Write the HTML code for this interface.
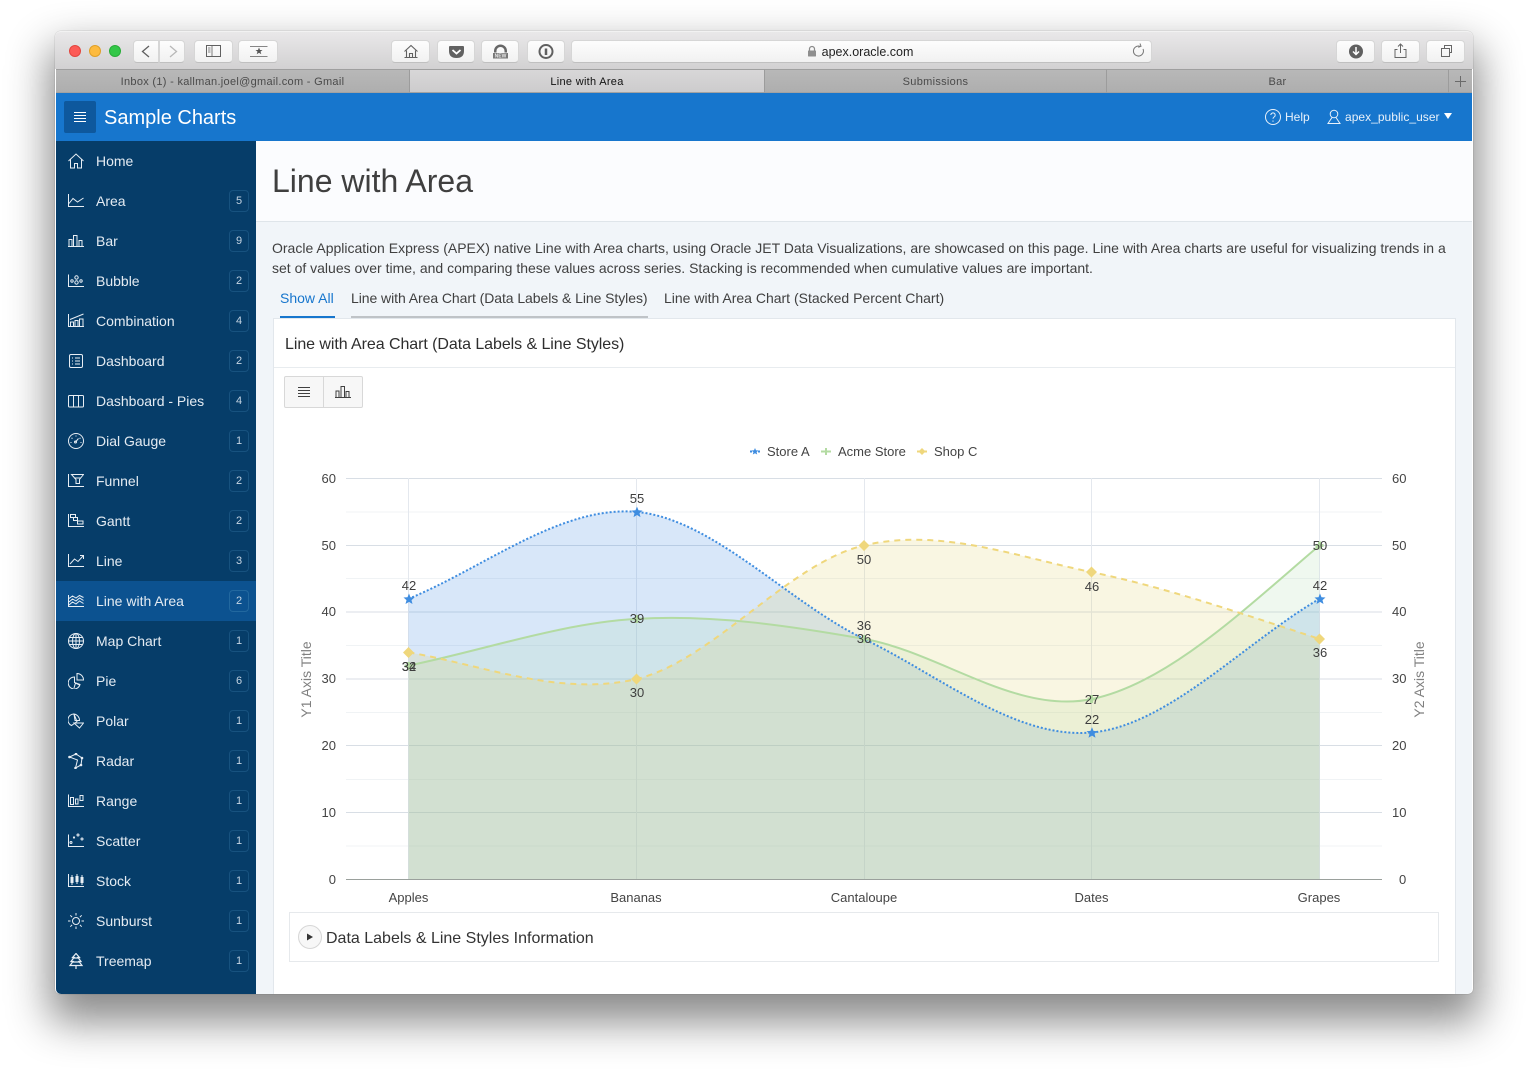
<!DOCTYPE html>
<html lang="en"><head><meta charset="utf-8"><title>Line with Area</title>
<style>
*{box-sizing:border-box}
html,body{margin:0;padding:0;width:1528px;height:1074px;overflow:hidden;background:#fff;font-family:"Liberation Sans",sans-serif}
.a{position:absolute;white-space:nowrap}
#win{position:absolute;left:55px;top:31px;width:1418px;height:963px;border-radius:6px 6px 5px 5px;box-shadow:0 22px 42px 6px rgba(0,0,0,.46),0 0 1px rgba(0,0,0,.4)}
#chrome{position:absolute;left:55px;top:31px;width:1418px;height:38px;border-radius:6px 6px 0 0;background:linear-gradient(#e9e8e9,#d2d1d2);border-top:1px solid #f2f2f2}
.dot{position:absolute;top:45px;width:12px;height:12px;border-radius:50%}
.btn{position:absolute;top:40px;height:23px;border-radius:4px;background:linear-gradient(#fdfdfd,#f1f1f1);border:1px solid #d6d6d6;border-bottom-color:#c0c0c0}
.tab{position:absolute;top:69px;height:24px;background:linear-gradient(#b8b8b8,#aeaeae);border-top:1px solid #9f9f9f;border-bottom:1px solid #a2a2a2;border-right:1px solid #9c9c9c;text-align:center;font-size:11px;line-height:24px;color:#4a4a4a;letter-spacing:.3px}
#hdr{position:absolute;left:56px;top:93px;width:1416px;height:48px;background:#1776cd}
#side{position:absolute;left:56px;top:141px;width:200px;height:853px;background:#063d69;border-radius:0 0 0 5px}
.row{position:absolute;left:56px;width:200px;height:40px;color:#e4ebf2;font-size:14px;line-height:40px}
.row span{position:absolute;left:40px}
.row b{position:absolute;left:173px;top:9px;width:20px;height:22px;border:1px solid #17527f;border-radius:4px;font-weight:normal;font-size:11px;line-height:21px;text-align:center;color:#c6d5e3}
.row svg{position:absolute;left:12px;top:12px;width:16px;height:16px;fill:none;stroke:#e8eef4;stroke-width:1}
#main{position:absolute;left:256px;top:141px;width:1216px;height:853px;background:#f1f5f9;border-radius:0 0 5px 0;overflow:hidden}
svg text{font-family:"Liberation Sans",sans-serif}
</style></head><body>
<div id="win"></div>
<div id="chrome"></div>
<div class="dot" style="left:69px;background:#fc5b57;border:1px solid #e2463f"></div>
<div class="dot" style="left:89px;background:#fdbb40;border:1px solid #e0a028"></div>
<div class="dot" style="left:109px;background:#33c748;border:1px solid #28ad38"></div>

<div class="btn" style="left:133px;width:26px;border-radius:4px 0 0 4px"></div>
<div class="btn" style="left:159px;width:26px;border-radius:0 4px 4px 0"></div>
<div class="btn" style="left:194px;width:39px"></div>
<div class="btn" style="left:238px;width:40px"></div>
<div class="btn" style="left:391px;width:39px"></div>
<div class="btn" style="left:437px;width:38px"></div>
<div class="btn" style="left:481px;width:38px"></div>
<div class="btn" style="left:527px;width:38px"></div>
<div class="btn" style="left:571px;width:581px"></div>
<div class="btn" style="left:1336px;width:39px"></div>
<div class="btn" style="left:1381px;width:39px"></div>
<div class="btn" style="left:1426px;width:39px"></div>
<svg class="a" style="left:0;top:0" width="1528" height="93" fill="none" stroke="#606060">
<path d="M149 46l-6.500 5.500 6.500 5.500" stroke-width="1.300"/><path d="M170 46l6.500 5.500-6.500 5.500" stroke="#b8b8b8" stroke-width="1.300"/>
<rect x="206.500" y="45.500" width="14" height="11"/><path d="M212 46v10M208 48h2.500M208 50h2.500M208 52h2.500" stroke-width=".8"/>
<path d="M250 46.500h17.500M250 56.500h17.500" stroke-width=".8"/><path d="M259 47.500l1 2.500h2.500l-2 1.600.8 2.600-2.300-1.500-2.300 1.500.8-2.600-2-1.600h2.500z" fill="#555" stroke="none"/>
<path d="M404.500 51.500l6.500-6 6.500 6M406.500 50.500v7h9v-7M409.500 57.500v-4h3v4M404.500 57.500h13" stroke-width="1.100"/>
<path d="M449 46h14q1 0 1 1v4q0 7-7.500 7t-7.500-7v-4q0-1 1-1z" fill="#616161" stroke="none"/><path d="M452.500 50l4 3.500 4-3.500" stroke="#fff" stroke-width="1.800"/>
<path d="M494 52.500v-1.500a6.500 6.500 0 0 1 13 0v1.500h-2.500v-1.500a4 4 0 0 0-8 0v1.500z" fill="#666" stroke="none"/><rect x="493" y="53" width="15" height="5.500" fill="#777" stroke="none"/>
<text x="500.500" y="57.600" font-size="5" font-weight="bold" fill="#e8e8e8" stroke="none" text-anchor="middle">NEW</text>
<circle cx="546" cy="51.500" r="6.500" stroke-width="2"/><path d="M546 48.500v6.500" stroke-width="2.500"/>
<path d="M809.500 50.500v-1.500a2.500 2.500 0 0 1 5 0v1.500" stroke="#8a8a8a" stroke-width="1.200"/><rect x="808" y="50.500" width="8" height="6" rx=".5" fill="#8e8e8e" stroke="none"/>
<path d="M1143 49a5 5 0 1 1-3-2.700M1140 43.500l1 2.800-2.800 1" stroke="#777"/>
<circle cx="1356" cy="51.500" r="7" fill="#5f5f5f" stroke="none"/><path d="M1356 47v7M1353 51.500l3 3 3-3" stroke="#fff" stroke-width="1.500"/>
<path d="M1397.500 49.500h-2.500v8h11v-8h-2.500M1400.500 44v9M1398 46.500l2.500-2.500 2.500 2.500" stroke="#666"/>
<rect x="1441.500" y="48.500" width="8" height="8" stroke="#666"/><path d="M1444.500 48v-2.500h7v7h-2" stroke="#666"/>
</svg>
<div class="a" style="left:571px;width:581px;top:45px;text-align:center;font-size:12.500px;color:#222;padding-left:12px">apex.oracle.com</div>

<div class="tab" style="left:56px;width:354px">Inbox (1) - kallman.joel@gmail.com - Gmail</div>
<div class="tab" style="left:410px;width:355px;background:linear-gradient(#d8d7d8,#cdcccd);color:#111">Line with Area</div>
<div class="tab" style="left:765px;width:342px">Submissions</div>
<div class="tab" style="left:1107px;width:342px">Bar</div>
<div class="tab" style="left:1449px;width:23px;border-right:0"></div>
<svg class="a" style="left:0;top:0" width="1528" height="93" fill="none" stroke="#6a6a6a"><path d="M1455 81.500h11M1460.500 76v11"/></svg>

<div id="hdr"></div>
<div class="a" style="left:64px;top:101px;width:32px;height:32px;background:#0e589d;border-radius:2px"></div>
<svg class="a" style="left:74px;top:112px" width="12" height="11" stroke="#fff" stroke-width="1"><path d="M0 .5h12M0 3.500h12M0 6.500h12M0 9.500h12"/></svg>
<div class="a" style="left:104px;top:106px;font-size:20px;line-height:24px;color:#fff">Sample Charts</div>
<svg class="a" style="left:1264px;top:108px" width="18" height="18" fill="none" stroke="#e8f1fa"><circle cx="9" cy="9" r="7.500"/><path d="M6.800 7a2.200 2.200 0 1 1 3.300 2c-.8.500-1.100.9-1.100 1.800M9 12.500v1.200"/></svg>
<div class="a" style="left:1285px;top:110px;font-size:12px;color:#e8f1fa">Help</div>
<svg class="a" style="left:1326px;top:109px" width="16" height="16" fill="none" stroke="#e8f1fa"><circle cx="8" cy="5" r="3.800"/><path d="M6 8.500l-4 6h12l-4-6"/></svg>
<div class="a" style="left:1345px;top:110px;font-size:12px;letter-spacing:.03px;color:#e8f1fa">apex_public_user</div>
<svg class="a" style="left:1444px;top:113px" width="8" height="7"><path d="M0 0h8L4 6z" fill="#fff"/></svg>

<div id="side"></div>
<div class="row" style="top:141px"><svg viewBox="0 0 16 16"><path d="M.5 8L8 1l7.500 7M2.500 6.500v8.500h4v-4.500h3V15h4V6.500"/></svg><span>Home</span></div>
<div class="row" style="top:181px"><svg viewBox="0 0 16 16"><path d="M.5 1v12.500H16M1 10.500l4-5 4.500 3.500 6-4"/></svg><span>Area</span><b>5</b></div>
<div class="row" style="top:221px"><svg viewBox="0 0 16 16"><path d="M0 13.500h16M1 13.500V6.500h3v7M5.500 13.500V2.500h3.500v11M11 13.500V7.500h3v6"/></svg><span>Bar</span><b>9</b></div>
<div class="row" style="top:261px"><svg viewBox="0 0 16 16"><path d="M.5 1.500v12H16"/><circle cx="4" cy="8" r="1.200"/><circle cx="8.500" cy="4.500" r="1.700"/><circle cx="8.500" cy="9.500" r="1.700"/><circle cx="13" cy="8" r="1.200"/></svg><span>Bubble</span><b>2</b></div>
<div class="row" style="top:301px"><svg viewBox="0 0 16 16"><path d="M.5 1v12.500H16M2.500 13.500v-4.500h3v4.500M7 13.500V7.500h3v6M11.500 13.500V6h3.500v7.500M2 6.500L15.500 1"/></svg><span>Combination</span><b>4</b></div>
<div class="row" style="top:341px"><svg viewBox="0 0 16 16"><rect x="1.500" y="1.500" width="13" height="13" rx="1.500"/><path d="M4 5h1M7 5h5M4 8h1M7 8h5M4 11h1M7 11h5"/></svg><span>Dashboard</span><b>2</b></div>
<div class="row" style="top:381px"><svg viewBox="0 0 16 16"><rect x=".5" y="2.500" width="15" height="11.500" rx="1"/><path d="M5.500 2.500v11.500M10.500 2.500v11.500"/></svg><span>Dashboard - Pies</span><b>4</b></div>
<div class="row" style="top:421px"><svg viewBox="0 0 16 16"><circle cx="8" cy="8" r="7.500"/><path d="M8 2.500v1M3.500 5l1 .5M12.500 5l-1 .5M2.500 9.500h1M12.500 9.500h1M7.500 9l3-3.500"/><circle cx="7.500" cy="9" r="1"/></svg><span>Dial Gauge</span><b>1</b></div>
<div class="row" style="top:461px"><svg viewBox="0 0 16 16"><path d="M.5 1v12.500H16M3.500 1.500h12l-4 5v4h-3.500v-4zM6 5h6.500"/></svg><span>Funnel</span><b>2</b></div>
<div class="row" style="top:501px"><svg viewBox="0 0 16 16"><path d="M.5 1v12.500H16M2.500 1.500h5v3h-5zM5.500 4.500h4v3h-4zM9.500 8h5.500v3H9.500z"/></svg><span>Gantt</span><b>2</b></div>
<div class="row" style="top:541px"><svg viewBox="0 0 16 16"><path d="M.5 1v12.500H16M2 11l4.500-5 3.500 2.500 5.500-6M12 2.500h3.500V6"/></svg><span>Line</span><b>3</b></div>
<div class="row" style="top:581px;background:#0c5290"><svg viewBox="0 0 16 16"><path d="M.5 2v11.500H16M1 5.500L4.500 3 8 5l3.500-2.500 4 2M1 9l3.500-3L8 8l3.500-3 4 2.500M1 12l3.500-3L8 11l3.500-3 4 2.500"/></svg><span>Line with Area</span><b style="border-color:#22689f">2</b></div>
<div class="row" style="top:621px"><svg viewBox="0 0 16 16"><circle cx="8" cy="8" r="7.500"/><ellipse cx="8" cy="8" rx="3.500" ry="7.500"/><path d="M8 .5v15M.5 8h15M1.500 4.500h13M1.500 11.500h13"/></svg><span>Map Chart</span><b>1</b></div>
<div class="row" style="top:661px"><svg viewBox="0 0 16 16"><path d="M6.500 4A6 6 0 1 0 12 11.500L6.500 9.500zM9 .5v6.500h6.500A6.500 6.500 0 0 0 9 .5zM6 15l1.500-5 4 2"/></svg><span>Pie</span><b>6</b></div>
<div class="row" style="top:701px"><svg viewBox="0 0 16 16"><path d="M6 1A6 6 0 0 0 3.500 12.500L9 8.500zM6 1A6.500 6.500 0 0 1 11.500 7.500H7zM6 10h9.500L11.500 15z"/></svg><span>Polar</span><b>1</b></div>
<div class="row" style="top:741px"><svg viewBox="0 0 16 16"><path d="M1.500 4L8 1l6 4-1 7-5.500 3L9.500 7z"/><circle cx="1.500" cy="4" r=".8"/><circle cx="8" cy="1" r=".8"/><circle cx="14" cy="5" r=".8"/><circle cx="13" cy="12" r=".8"/><circle cx="7.500" cy="15" r=".8"/></svg><span>Radar</span><b>1</b></div>
<div class="row" style="top:781px"><svg viewBox="0 0 16 16"><path d="M.5 1.500v12H16M2.500 4.500H5.500v7H2.500zM7.500 6H10v5H7.500zM12 2.500h3v5h-3z"/></svg><span>Range</span><b>1</b></div>
<div class="row" style="top:821px"><svg viewBox="0 0 16 16"><path d="M.5 1.500v12H16"/><circle cx="3" cy="9.500" r="1"/><circle cx="6" cy="4.500" r=".6"/><circle cx="10" cy="2" r="1"/><circle cx="14" cy="6" r="1"/></svg><span>Scatter</span><b>1</b></div>
<div class="row" style="top:861px"><svg viewBox="0 0 16 16"><path d="M.5 1v12.500H16M4 2v10M3 4.500h2v5H3zM9 1v10M8 3.500h2v5H8zM14 2v10M13 4.500h2v5h-2z"/></svg><span>Stock</span><b>1</b></div>
<div class="row" style="top:901px"><svg viewBox="0 0 16 16"><circle cx="8" cy="8" r="3.500"/><path d="M8 0v2.500M8 13.500V16M0 8h2.500M13.500 8H16M2.300 2.300l1.800 1.800M11.900 11.900l1.800 1.800M2.300 13.700l1.800-1.800M11.900 4.100l1.800-1.800"/></svg><span>Sunburst</span><b>1</b></div>
<div class="row" style="top:941px"><svg viewBox="0 0 16 16"><path d="M8 .5L4.500 4.500h1.500L3 8.500h2L2 12.500h12L11 8.500h2L10 4.500h1.500zM8 12.500V16M6 5h4M5 9h6" stroke-width="1.200"/></svg><span>Treemap</span><b>1</b></div>

<div id="main">
  <div class="a" style="left:0;top:0;width:1216px;height:81px;background:#fbfcfe;border-bottom:1px solid #dfe5ea"></div>
  <div class="a" style="left:16px;top:21px;font-size:32px;line-height:38px;color:#3f3f3f">Line with Area</div>
  <div class="a" style="left:16px;top:97px;font-size:14px;line-height:20px;color:#404040">Oracle Application Express (APEX) native Line with Area charts, using Oracle JET Data Visualizations, are showcased on this page. Line with Area charts are useful for visualizing trends in a<br>set of values over time, and comparing these values across series. Stacking is recommended when cumulative values are important.</div>
  <div class="a" style="left:24px;top:148px;height:29px;font-size:14px;line-height:18px;color:#1776cd;border-bottom:2px solid #1776cd;width:55px">Show All</div>
  <div class="a" style="left:95px;top:148px;height:29px;font-size:14px;line-height:18px;letter-spacing:-.065px;color:#404040;border-bottom:2px solid #bfc3c7;width:297px">Line with Area Chart (Data Labels &amp; Line Styles)</div>
  <div class="a" style="left:408px;top:148px;font-size:14px;line-height:18px;color:#404040">Line with Area Chart (Stacked Percent Chart)</div>
  <div class="a" style="left:17px;top:177px;width:1183px;height:690px;background:#fff;border:1px solid #e2e7ec"></div>
  <div class="a" style="left:18px;top:226px;width:1181px;height:1px;background:#e8ecef"></div>
  <div class="a" style="left:29px;top:194px;font-size:16px;line-height:20px;letter-spacing:-.065px;color:#2e2e2e">Line with Area Chart (Data Labels &amp; Line Styles)</div>
  <div class="a" style="left:28px;top:235px;width:40px;height:32px;background:#f7f7f7;border:1px solid #d8d8d8;border-radius:2px 0 0 2px"></div>
  <div class="a" style="left:67px;top:235px;width:40px;height:32px;background:#f7f7f7;border:1px solid #d8d8d8;border-radius:0 2px 2px 0"></div>
  <svg class="a" style="left:42px;top:246px" width="13" height="12" stroke="#404040" fill="none"><path d="M0 .5h12M0 3.500h12M0 6.500h12M0 9.500h12"/></svg>
  <svg class="a" style="left:79px;top:245px" width="16" height="13" stroke="#404040" fill="none"><path d="M0 11.500h16M1 11.500V5h3v6.500M6 11.500V.5h3.500v11M11 11.500V5.500h3v6"/></svg>
  <div class="a" style="left:33px;top:771px;width:1150px;height:50px;background:#fff;border:1px solid #e6e9ec"></div>
  <div class="a" style="left:42px;top:784px;width:24px;height:24px;border-radius:50%;background:#f7f7f7;border:1px solid #d6d6d6"></div>
  <svg class="a" style="left:50px;top:792px" width="8" height="8"><path d="M1 .5l6 3.500-6 3.500z" fill="#333"/></svg>
  <div class="a" style="left:70px;top:788px;font-size:16px;line-height:20px;color:#333">Data Labels &amp; Line Styles Information</div>
</div>

<svg class="a" style="left:0;top:0;pointer-events:none" width="1528" height="1074" font-size="13" fill="#444">
<g stroke="#f0f3f5"><path d="M346 512h1036M346 578.500h1036M346 645.500h1036M346 712.500h1036M346 779.500h1036M346 846h1036"/></g>
<g stroke="#d8dee5"><path d="M346 478.500h1036M346 545.500h1036M346 612h1036M346 679h1036M346 745.500h1036M346 812.500h1036"/></g>
<g stroke="#e4e8ee"><path d="M408.500 478v401M636.500 478v401M864.500 478v401M1091.500 478v401M1319.500 478v401"/></g>
<path d="M408.500 598.800C484.400 567.600 560.600 505.300 636.500 511.900C712.400 518.600 788.100 602.200 864 638.900C939.900 675.700 1015.600 739.200 1091.500 732.500C1167.400 725.800 1243.600 643.400 1319.500 598.800V879.500H408.500Z" fill="#3a85e0" fill-opacity=".2"/>
<path d="M408.500 665.600C484.400 650.100 560.600 623.300 636.500 618.900C712.400 614.400 788.100 625.500 864 638.900C939.900 652.300 1015.600 714.600 1091.500 699.100C1167.400 683.500 1243.600 610 1319.500 545.400V879.500H408.500Z" fill="#afdcaf" fill-opacity=".2"/>
<path d="M408.500 652.300C484.400 665.600 560.600 696.900 636.500 679C712.400 661.200 788.100 563.200 864 545.400C939.900 527.500 1015.600 556.500 1091.500 572.100C1167.400 587.700 1243.600 614.400 1319.500 638.900V879.500H408.500Z" fill="#e1d26e" fill-opacity=".2"/>
<path d="M346 879.500h1036" stroke="#9aa09c"/>
<path d="M408.500 665.600C484.400 650.100 560.600 623.300 636.500 618.900C712.400 614.400 788.100 625.500 864 638.900C939.900 652.300 1015.600 714.600 1091.500 699.100C1167.400 683.500 1243.600 610 1319.500 545.400" fill="none" stroke="#b3dba2" stroke-width="2"/>
<path d="M408.500 652.300C484.400 665.600 560.600 696.900 636.500 679C712.400 661.200 788.100 563.200 864 545.400C939.900 527.500 1015.600 556.500 1091.500 572.100C1167.400 587.700 1243.600 614.400 1319.500 638.900" fill="none" stroke="#efd77c" stroke-width="2" stroke-dasharray="6 5"/>
<path d="M408.500 598.800C484.400 567.600 560.600 505.300 636.500 511.900C712.400 518.600 788.100 602.200 864 638.900C939.900 675.700 1015.600 739.200 1091.500 732.500C1167.400 725.800 1243.600 643.400 1319.500 598.800" fill="none" stroke="#3f8de0" stroke-width="2" stroke-dasharray="2 2"/>
<g fill="#b3dba2"><path d="M407 662h3v2.500h2.500v3H410v2.500h-3v-2.500h-2.500v-3h2.500zM635 615h3v2.500h2.500v3H638v2.500h-3v-2.500h-2.500v-3h2.500zM862.500 635h3v2.500h2.500v3h-2.500v2.500h-3v-2.500H860v-3h2.500zM1090 695h3v2.500h2.500v3H1093v2.500h-3v-2.500h-2.500v-3h2.500zM1318 541.500h3v2.500h2.500v3H1321v2.500h-3v-2.500h-2.500v-3h2.500z"/></g>
<g fill="#efd77c"><path d="M408.500 647l5.500 5.500-5.500 5.500-5.500-5.500zM636.500 673.500l5.500 5.500-5.500 5.500-5.500-5.500zM864 540l5.500 5.500-5.500 5.500-5.500-5.500zM1091.500 566.500l5.500 5.500-5.500 5.500-5.500-5.500zM1319.500 633.500l5.500 5.500-5.500 5.500-5.500-5.500z"/></g>
<g fill="#3f8de0"><path d="M409 593.500l1.500 3.700 4 .3-3 2.600 1 3.900-3.500-2.100-3.500 2.100 1-3.900-3-2.600 4-.3z"/><path d="M637 506.600l1.500 3.700 4 .3-3 2.600 1 3.900-3.500-2.100-3.500 2.100 1-3.900-3-2.600 4-.3z"/><path d="M1092 727.200l1.500 3.700 4 .3-3 2.600 1 3.900-3.500-2.100-3.500 2.100 1-3.900-3-2.600 4-.3z"/><path d="M1320 593.500l1.500 3.700 4 .3-3 2.600 1 3.900-3.500-2.100-3.500 2.100 1-3.900-3-2.600 4-.3z"/></g>
<g text-anchor="middle" fill="#3e3e3e">
<text x="409" y="590">42</text><text x="637" y="503">55</text><text x="637" y="623">39</text><text x="409" y="671">32</text><text x="409" y="671">34</text><text x="637" y="697">30</text>
<text x="864" y="564">50</text><text x="864" y="630">36</text><text x="864" y="643">36</text>
<text x="1092" y="591">46</text><text x="1092" y="704">27</text><text x="1092" y="724">22</text>
<text x="1320" y="550">50</text><text x="1320" y="590">42</text><text x="1320" y="657">36</text>
</g>
<g text-anchor="end" fill="#444">
<text x="336" y="483">60</text><text x="336" y="550">50</text><text x="336" y="616">40</text><text x="336" y="683">30</text><text x="336" y="750">20</text><text x="336" y="817">10</text><text x="336" y="884">0</text>
</g>
<g fill="#444">
<text x="1392" y="483">60</text><text x="1392" y="550">50</text><text x="1392" y="616">40</text><text x="1392" y="683">30</text><text x="1392" y="750">20</text><text x="1392" y="817">10</text><text x="1399" y="884">0</text>
</g>
<g text-anchor="middle" fill="#444">
<text x="408.500" y="902">Apples</text><text x="636" y="902">Bananas</text><text x="864" y="902">Cantaloupe</text><text x="1091.500" y="902">Dates</text><text x="1319" y="902">Grapes</text>
</g>
<text transform="translate(311 679.500) rotate(-90)" text-anchor="middle" font-size="14" fill="#808080">Y1 Axis Title</text>
<text transform="translate(1424 679.500) rotate(-90)" text-anchor="middle" font-size="14" fill="#808080">Y2 Axis Title</text>
<path d="M750 451.500h10" stroke="#3f8de0" stroke-width="2" stroke-dasharray="2 2"/><path d="M755 448l1 2.300 2.500.2-1.900 1.600.6 2.400-2.200-1.300-2.200 1.300.6-2.400-1.900-1.600 2.500-.2z" fill="#3f8de0"/>
<path d="M821 451.500h10M826 448v7" stroke="#b3dba2" stroke-width="2"/>
<path d="M917 451.500h10" stroke="#efd77c" stroke-width="2"/><path d="M922 448l3.500 3.500-3.500 3.500-3.500-3.500z" fill="#efd77c"/>
<text x="767" y="456">Store A</text><text x="838" y="456">Acme Store</text><text x="934" y="456">Shop C</text>
</svg>
</body></html>
